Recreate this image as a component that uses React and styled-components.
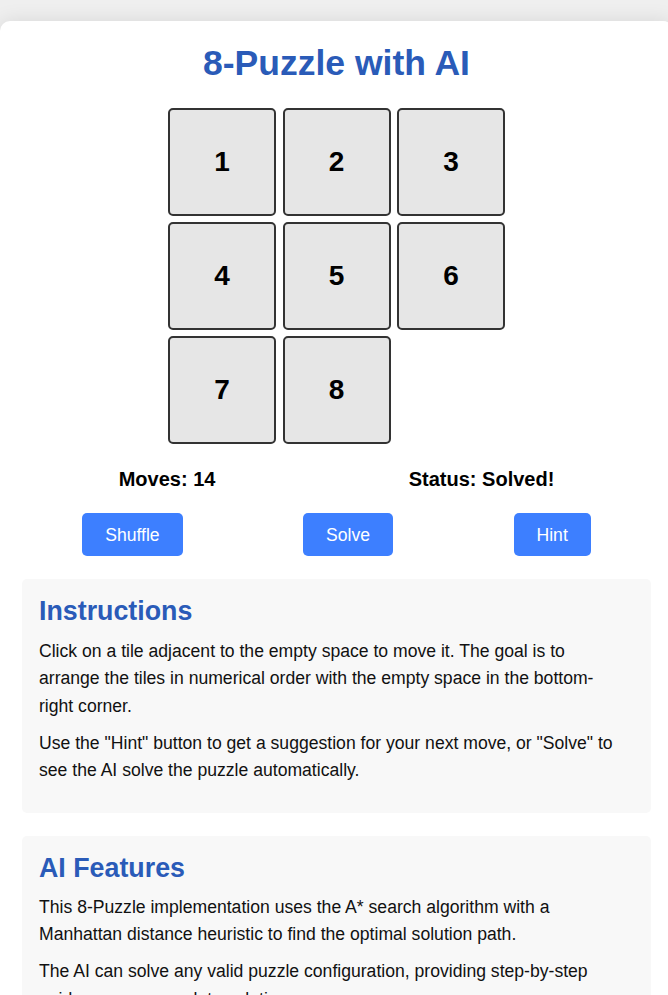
import React from "react";
import styled, { createGlobalStyle } from "styled-components";

const Global = createGlobalStyle`
  html, body { margin: 0; padding: 0; }
  body {
    background: #efefef;
    font-family: "Liberation Sans", Arial, sans-serif;
    color: #000;
    overflow-x: hidden;
  }
`;

const Page = styled.div`
  padding-top: 21px;
  width: 668px;
`;

const Card = styled.div`
  box-sizing: border-box;
  width: 673px;
  background: #fff;
  border-radius: 10px;
  box-shadow: 0 0 20px rgba(0, 0, 0, 0.1);
  padding: 22px 22px 30px;
`;

const Title = styled.h1`
  margin: 0 0 24px;
  text-align: center;
  font-size: 35.5px;
  font-weight: 700;
  color: #2a5bb8;
  line-height: 1.15;
`;

const Board = styled.div`
  display: grid;
  grid-template-columns: repeat(3, 108px);
  grid-auto-rows: 108px;
  column-gap: 6.5px;
  row-gap: 6px;
  justify-content: center;
`;

const Tile = styled.div`
  box-sizing: border-box;
  display: flex;
  align-items: center;
  justify-content: center;
  background: ${(p) => (p.$empty ? "transparent" : "#e6e6e6")};
  border: ${(p) => (p.$empty ? "none" : "2px solid #333")};
  border-radius: 5px;
  font-size: 28px;
  font-weight: 700;
  color: #000;
`;

const InfoRow = styled.div`
  display: flex;
  justify-content: space-around;
  margin-top: 24px;
  font-size: 20px;
  font-weight: 700;
  line-height: 23px;
`;

const ButtonRow = styled.div`
  display: flex;
  justify-content: space-around;
  margin-top: 22.5px;
`;

const Button = styled.button`
  background: #3d7fff;
  color: #fff;
  border: none;
  border-radius: 5px;
  font-family: "Liberation Sans", Arial, sans-serif;
  font-size: 17.6px;
  line-height: 20.2px;
  padding: 11.4px 22.9px;
  cursor: pointer;
`;

const Section = styled.section`
  margin-top: ${(p) => p.$gap}px;
  background: #f8f8f8;
  border-radius: 5px;
  padding: 17px 32px 18.5px 17px;
`;

const SectionTitle = styled.h2`
  margin: 0 0 10.5px;
  font-size: 26.8px;
  font-weight: 700;
  line-height: 1.15;
  color: #2a5bb8;
`;

const Para = styled.p`
  margin: 0 0 9.5px;
  font-size: 17.6px;
  line-height: 27.5px;
  color: #111;
`;

const tiles = [1, 2, 3, 4, 5, 6, 7, 8, 0];

export default function App() {
  return (
    <>
      <Global />
      <Page>
        <Card>
          <Title>8-Puzzle with AI</Title>
          <Board>
            {tiles.map((t, i) => (
              <Tile key={i} $empty={t === 0}>
                {t === 0 ? "" : t}
              </Tile>
            ))}
          </Board>
          <InfoRow>
            <span>Moves: 14</span>
            <span>Status: Solved!</span>
          </InfoRow>
          <ButtonRow>
            <Button>Shuffle</Button>
            <Button>Solve</Button>
            <Button>Hint</Button>
          </ButtonRow>
          <Section $gap={23}>
            <SectionTitle>Instructions</SectionTitle>
            <Para>
              Click on a tile adjacent to the empty space to move it. The goal is
              to arrange the tiles in numerical order with the empty space in the
              bottom-right corner.
            </Para>
            <Para>
              Use the "Hint" button to get a suggestion for your next move, or
              "Solve" to see the AI solve the puzzle automatically.
            </Para>
          </Section>
          <Section $gap={23}>
            <SectionTitle>AI Features</SectionTitle>
            <Para>
              This 8-Puzzle implementation uses the A* search algorithm with a
              Manhattan distance heuristic to find the optimal solution path.
            </Para>
            <Para>
              The AI can solve any valid puzzle configuration, providing
              step-by-step guidance or a complete solution.
            </Para>
          </Section>
        </Card>
      </Page>
    </>
  );
}
